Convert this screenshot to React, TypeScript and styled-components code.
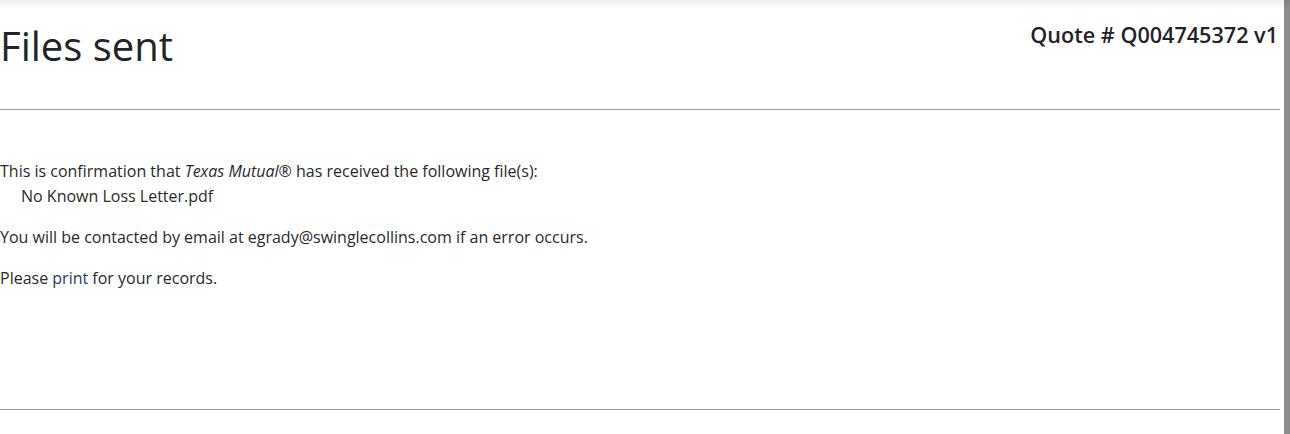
import styled, { createGlobalStyle } from "styled-components"

const GlobalStyle = createGlobalStyle`
  html, body {
    margin: 0;
    padding: 0;
    background: #fff;
  }
  body {
    font-family: "Open Sans", "Liberation Sans", sans-serif;
    color: #212529;
    overflow: hidden;
  }
`

const Frame = styled.div`
  display: flex;
  height: 434px;
  position: relative;
  &::before {
    content: "";
    position: absolute;
    top: 0;
    left: 0;
    right: 0;
    height: 8px;
    background: linear-gradient(rgba(0, 0, 0, 0.07), rgba(0, 0, 0, 0));
    pointer-events: none;
  }
`

const Page = styled.main`
  width: 1280px;
  flex: none;
`

const SideBar = styled.div`
  width: 6px;
  margin-left: 4px;
  background: #8c8c8c;
`

const Header = styled.header`
  display: flex;
  justify-content: space-between;
  align-items: flex-start;
  height: 109px;
  border-bottom: 1px solid #999;
`

const Title = styled.h1`
  margin: 22px 0 0 0;
  font-size: 40px;
  font-weight: 400;
  line-height: 1.2;
`

const QuoteNumber = styled.h2`
  margin: 22px 2px 0 0;
  font-size: 21.6px;
  font-weight: 600;
  line-height: 1.2;
  color: #1f2328;
`

const Body = styled.section`
  height: 300px;
  padding-top: 49px;
  box-sizing: border-box;
  border-bottom: 1px solid #999;
  font-size: 16px;
  line-height: 25px;
  color: #2a2a2a;
`

const Para = styled.p`
  margin: 0 0 16px 0;
`

const FileName = styled.div`
  padding-left: 21px;
`

const Link = styled.a`
  color: #1d3a5f;
  text-decoration: none;
`

export default function App() {
  return (
    <>
      <GlobalStyle />
      <Frame>
        <Page>
          <Header>
            <Title>Files sent</Title>
            <QuoteNumber>Quote # Q004745372 v1</QuoteNumber>
          </Header>
          <Body>
            <Para>
              This is confirmation that <em>Texas Mutual®</em> has received the following file(s):
              <FileName>No Known Loss Letter.pdf</FileName>
            </Para>
            <Para>You will be contacted by email at egrady@swinglecollins.com if an error occurs.</Para>
            <Para>
              Please <Link href="#">print</Link> for your records.
            </Para>
          </Body>
        </Page>
        <SideBar />
      </Frame>
    </>
  )
}
